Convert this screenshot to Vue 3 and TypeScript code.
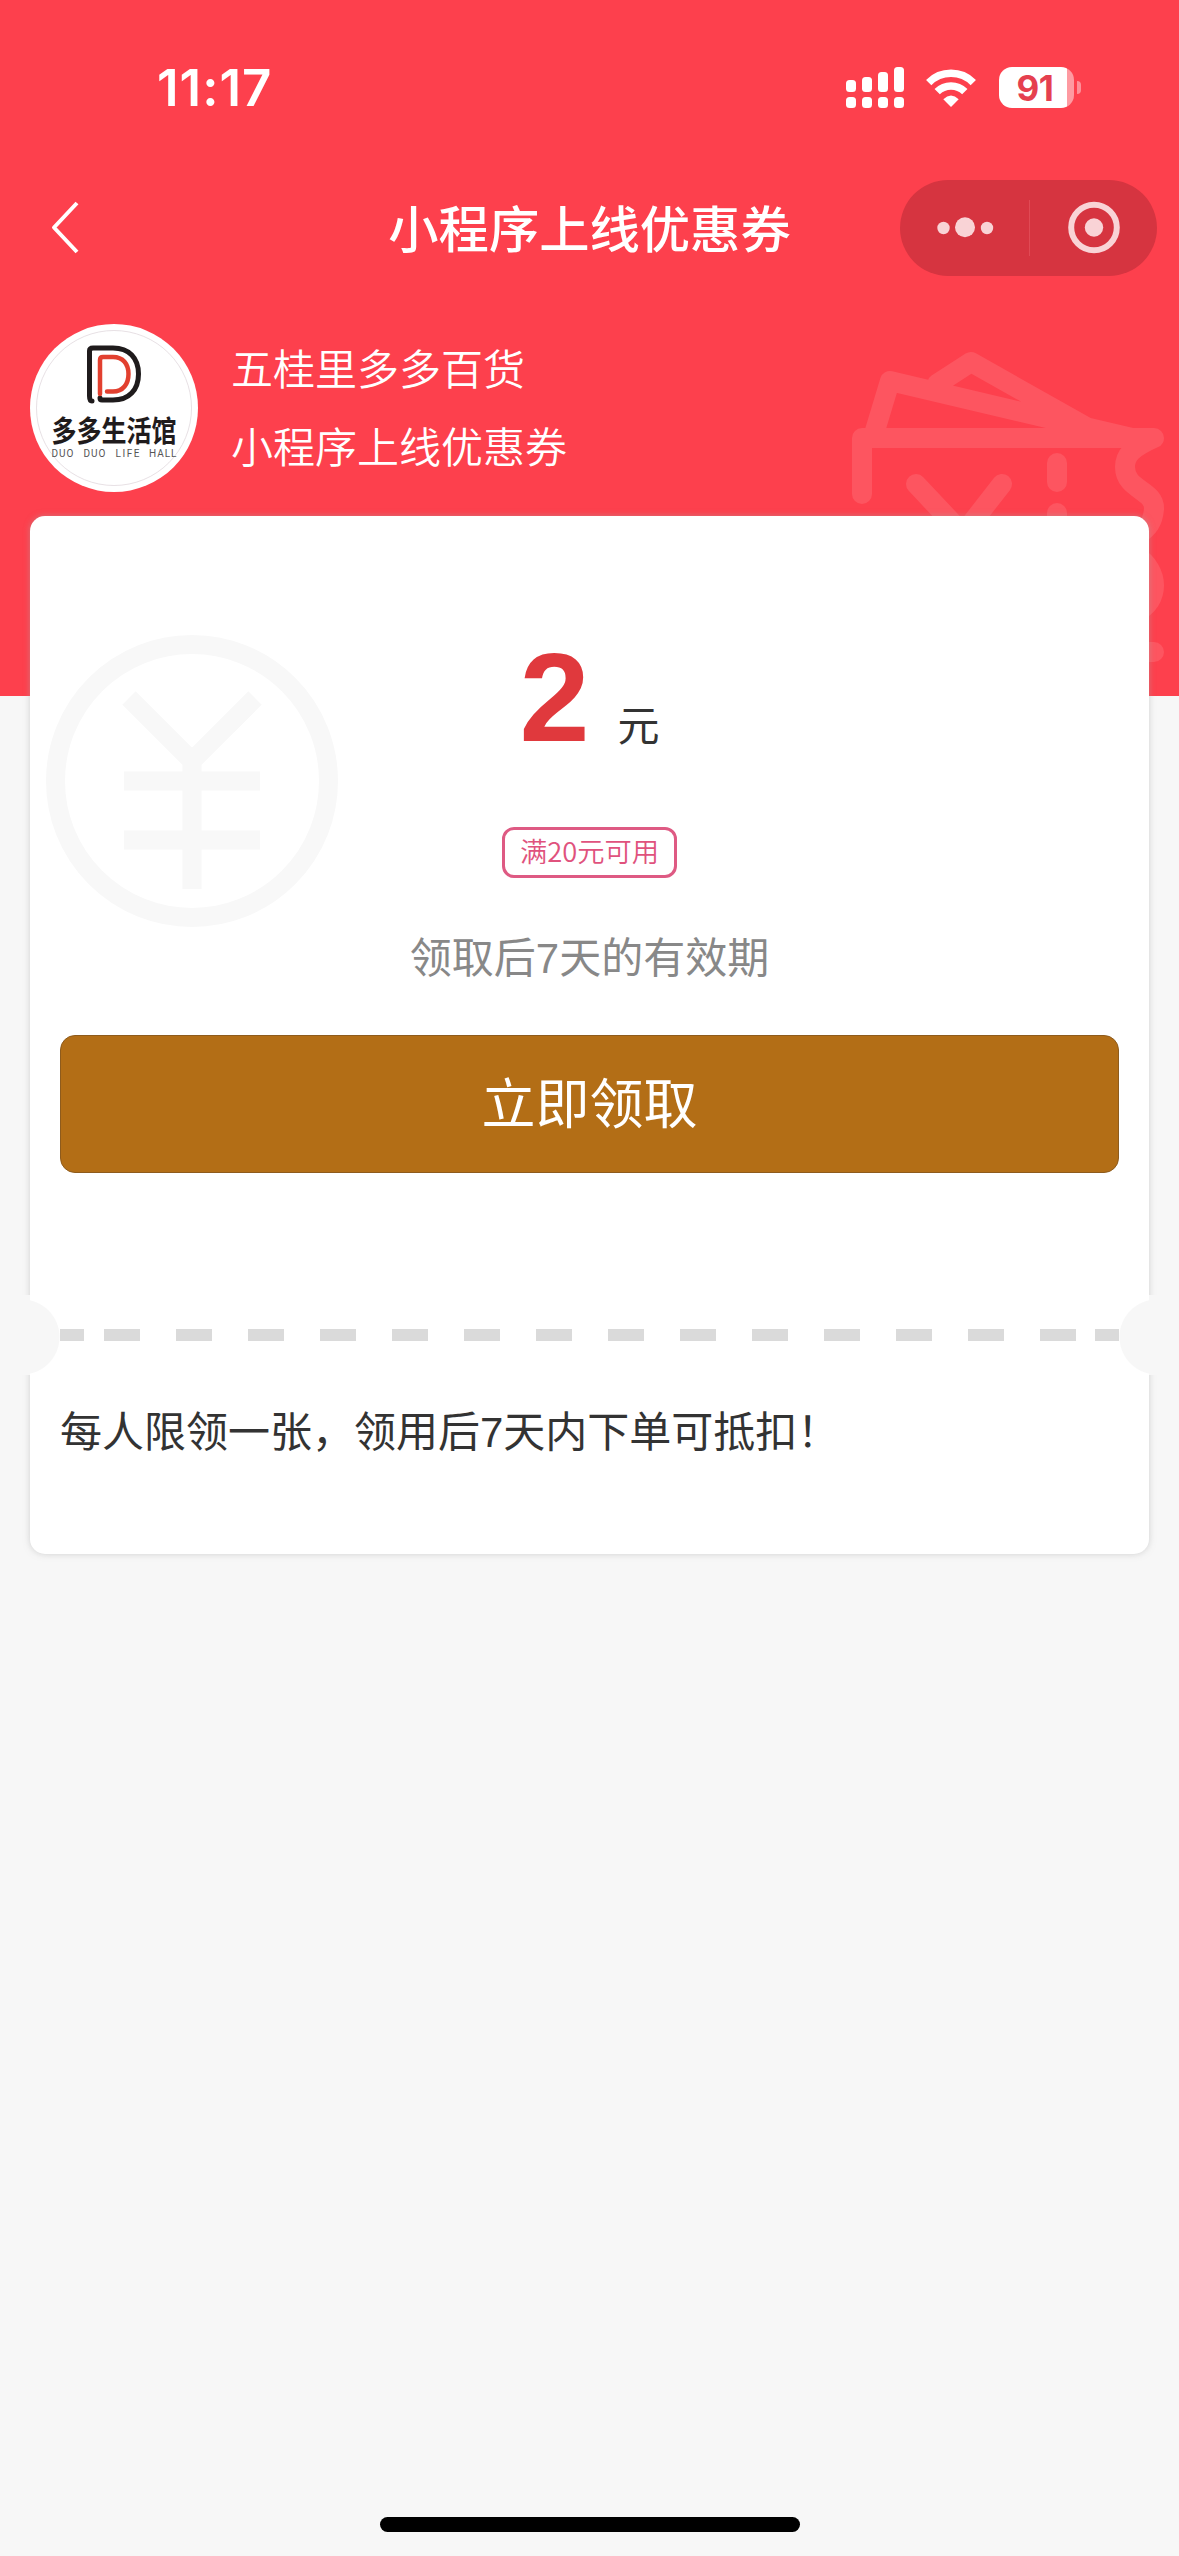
<script setup lang="ts">
const title: string = '小程序上线优惠券'
const shop: string = '五桂里多多百货'
const signalBars: { x: number; top: number }[] = [
  { x: 0, top: 13 },
  { x: 16, top: 10 },
  { x: 32, top: 5 },
  { x: 48, top: 0 },
]
const dashes: number[] = Array.from({ length: 14 }, (_, i) => i)
</script>

<template>
  <div class="page">
    <svg class="tickets" width="359" height="376" viewBox="820 320 359 376">
      <g fill="none" stroke="#fff" stroke-width="20" stroke-linecap="round" stroke-linejoin="round" opacity="0.11">
        <path
          d="M862 494V438H1154C1132 448 1125 455 1125 467C1125 490 1155 490 1154 509C1153 522 1148 528 1138 535M874 434L890 381L1132 438M937 384L971 362L1088 428M916 484L963 534L1002 484M1057 463V482M1057 513V540M1136 556C1160 570 1160 602 1136 612M1130 652H1154"
        />
      </g>
    </svg>

    <header class="status">
      <span class="time">11:17</span>
      <div class="indicators">
        <svg width="58" height="41" viewBox="0 0 58 41" fill="#fff">
          <g v-for="b in signalBars" :key="b.x">
            <rect :x="b.x" :y="b.top" width="10" :height="25 - b.top" rx="3.5" />
            <rect :x="b.x" y="30" width="10" height="11" rx="3.5" />
          </g>
        </svg>
        <svg class="wifi" width="50" height="38" viewBox="0 0 50 38">
          <g fill="none" stroke="#fff" stroke-width="7.5">
            <path d="M2.7 13.6A31.5 31.5 0 0 1 47.3 13.6" />
            <path d="M11.2 22.6A19.5 19.5 0 0 1 38.8 22.6" />
          </g>
          <path d="M25 38L17.3 30.2Q25 22.8 32.7 30.2Z" fill="#fff" />
        </svg>
        <div class="battery">
          <div class="cell"><span>91</span></div>
          <i class="nub"></i>
        </div>
      </div>
    </header>

    <nav class="nav">
      <svg class="back" width="30" height="54" viewBox="0 0 30 54" fill="none" stroke="#fff" stroke-width="4">
        <path d="M27 2L4 26.5L27 51" stroke-linejoin="round" />
      </svg>
      <h1>{{ title }}</h1>
      <div class="capsule">
        <svg width="257" height="96" viewBox="0 0 257 96">
          <g fill="#f9d3d6">
            <circle cx="43.5" cy="48" r="6.2" />
            <circle cx="65" cy="47.3" r="10" />
            <circle cx="87" cy="48" r="6.2" />
            <circle cx="194" cy="47.5" r="9.2" />
          </g>
          <circle cx="194" cy="47.5" r="22.8" fill="none" stroke="#f9d3d6" stroke-width="6" />
          <path d="M129.5 20V76" stroke="#e04a55" stroke-width="1" />
        </svg>
      </div>
    </nav>

    <section class="shop">
      <svg class="logo" width="168" height="168" viewBox="0 0 168 168">
        <circle cx="84" cy="84" r="84" fill="#fff" />
        <circle cx="84" cy="84" r="77.5" fill="none" stroke="#dcd2d8" stroke-width="0.7" />
        <g fill="none" stroke-width="5" stroke-linecap="round" stroke-linejoin="round">
          <path
            d="M62 77Q59.500 77 59.500 72V27Q59.500 24 63 24H83C99 24 108.500 34 108.500 50S99 76 83 76H72Q70 76 70 74"
            stroke="#1f1b1c"
          />
          <path d="M70 70V36Q70 33 73 33H83C93 33 98.500 40 98.500 50S93 67.500 83 67.500H77" stroke="#e2402f" stroke-width="4.500" />
        </g>
        <text class="logo-cn" x="21.500" y="117.500" textLength="125" lengthAdjust="spacingAndGlyphs">多多生活馆</text>
        <g class="logo-en">
          <text x="21.500" y="133" textLength="22">DUO</text>
          <text x="53.500" y="133" textLength="22">DUO</text>
          <text x="85.500" y="133" textLength="24">LIFE</text>
          <text x="119" y="133" textLength="27.500">HALL</text>
        </g>
      </svg>
      <div class="shop-text">
        <p>{{ shop }}</p>
        <p>{{ title }}</p>
      </div>
    </section>

    <main class="card">
      <svg class="yuan" width="294" height="294" viewBox="0 0 294 294">
        <g fill="none" stroke="#f8f8f8" stroke-width="19">
          <circle cx="147" cy="147" r="136.500" />
          <path d="M84 64L147 127L210 64M79 147H215M79 206H215M147 125V255" stroke-linejoin="round" />
        </g>
      </svg>
      <div class="amount"><b>2</b><span>元</span></div>
      <div class="badge">满20元可用</div>
      <p class="valid">领取后7天的有效期</p>
      <button type="button">立即领取</button>
      <div class="divider">
        <i class="notch left"></i>
        <i class="edge"></i>
        <i v-for="d in dashes" :key="d" class="dash"></i>
        <i class="edge"></i>
        <i class="notch right"></i>
      </div>
      <p class="note">每人限领一张，领用后7天内下单可抵扣！</p>
    </main>

    <i class="home"></i>
  </div>
</template>

<style>
body {
  margin: 0;
  background: #f7f7f7;
}
</style>

<style scoped>
.page {
  position: relative;
  box-sizing: border-box;
  width: 1179px;
  height: 2556px;
  display: flex;
  flex-direction: column;
  overflow: hidden;
  background: linear-gradient(#fd404d 696px, #f7f7f7 696px);
  font-family: 'Liberation Sans', 'Noto Sans CJK SC', sans-serif;
  color: #333;
}
p,
h1 {
  margin: 0;
  font-weight: 400;
}
i {
  display: block;
}
svg {
  display: block;
}
.tickets {
  position: absolute;
  left: 820px;
  top: 320px;
}
.status {
  height: 180px;
  box-sizing: border-box;
  padding: 67px 98px 0 157px;
  display: flex;
  justify-content: space-between;
  align-items: flex-start;
}
.time {
  font: 600 51px/42px Inter, sans-serif;
  letter-spacing: 1px;
  color: #fff;
}
.indicators {
  display: flex;
  align-items: center;
  height: 41px;
}
.wifi {
  margin: 0 23px 0 22px;
}
.battery {
  display: flex;
  align-items: center;
  gap: 3px;
}
.cell {
  width: 75px;
  height: 41px;
  border-radius: 13px;
  background: linear-gradient(90deg, #fff 68px, #fe9aa1 68px);
  box-sizing: border-box;
  padding-right: 3px;
  text-align: center;
  font: 700 35px/42px Inter, sans-serif;
  letter-spacing: -0.500px;
  color: #e5404f;
}
.nub {
  width: 4px;
  height: 13px;
  border-radius: 0 5px 5px 0;
  background: #fe8f98;
}
.nav {
  display: grid;
  grid-template-columns: 257px 1fr 257px;
  align-items: center;
  height: 96px;
  padding: 0 22px;
}
.back {
  margin-left: 28px;
}
.nav h1 {
  text-align: center;
  font: 500 50.300px/92px 'Noto Sans CJK SC', sans-serif;
  color: #fff;
  padding-bottom: 4px;
  white-space: nowrap;
}
.capsule {
  height: 96px;
  border-radius: 48px;
  background: #d63440;
}
.shop {
  display: flex;
  margin: 48px 30px 24px;
  height: 168px;
}
.logo-cn {
  font: 700 29px 'Noto Sans CJK SC', sans-serif;
  fill: #1f1b1c;
}
.logo-en {
  font: 400 10px Roboto, sans-serif;
  fill: #555;
}
.shop-text {
  margin: 4px 0 0 33px;
}
.shop-text p {
  font: 350 42px/78px 'Noto Sans CJK SC', sans-serif;
  color: #fff;
}
.card {
  position: relative;
  box-sizing: border-box;
  width: 1119px;
  height: 1038px;
  margin: 0 30px;
  border-radius: 15px;
  background: #fff;
  box-shadow: 0 0 6px rgba(170, 170, 170, 0.5);
  display: flex;
  flex-direction: column;
  align-items: center;
}
.yuan {
  position: absolute;
  left: 15px;
  top: 118px;
}
.amount {
  position: relative;
  height: 144px;
  margin-top: 110px;
  display: flex;
  align-items: baseline;
  line-height: 144px;
}
.amount b {
  font-size: 126px;
  color: #e0393d;
}
.amount span {
  margin-left: 28px;
  font-size: 42px;
}
.badge {
  box-sizing: border-box;
  width: 175px;
  height: 51px;
  margin-top: 57px;
  border: 3px solid #de5a83;
  border-radius: 12px;
  text-align: center;
  white-space: nowrap;
  font: 350 27.300px/40px 'Noto Sans CJK SC', sans-serif;
  color: #e0527d;
}
.valid {
  margin-top: 51px;
  font-size: 42px;
  line-height: 60px;
  color: #888;
}
button {
  box-sizing: border-box;
  width: 1059px;
  height: 138px;
  margin-top: 46px;
  padding: 0 0 6px;
  border: 1px solid #8e5b1c;
  border-radius: 15px;
  background: #b36e16;
  font: 400 54px/130px 'Noto Sans CJK SC', sans-serif;
  color: #fff;
}
.divider {
  display: flex;
  align-items: center;
  align-self: stretch;
  position: relative;
  height: 80px;
  margin: 122px -8px 0;
}
.divider i {
  flex: none;
}
.notch {
  width: 38px;
  height: 80px;
}
.notch.left {
  background: linear-gradient(90deg, #f7f7f7 8px, transparent 8px),
    radial-gradient(circle at 0 42px, #f7f7f7 37px, transparent 38px);
}
.notch.right {
  background: linear-gradient(270deg, #f7f7f7 8px, transparent 8px),
    radial-gradient(circle at 100% 42px, #f7f7f7 37px, transparent 38px);
}
.edge,
.dash {
  height: 12px;
  background: #dadada;
}
.edge {
  width: 24px;
  margin-right: 20px;
}
.dash {
  width: 36px;
  margin-right: 36px;
}
.dash + .edge {
  margin-left: -17px;
  margin-right: 0;
}
.note {
  align-self: stretch;
  padding-left: 30px;
  margin-top: 28px;
  font-size: 42px;
  line-height: 60px;
}
.home {
  width: 420px;
  height: 15px;
  border-radius: 8px;
  background: #000;
  margin: auto auto 24px;
}
</style>
